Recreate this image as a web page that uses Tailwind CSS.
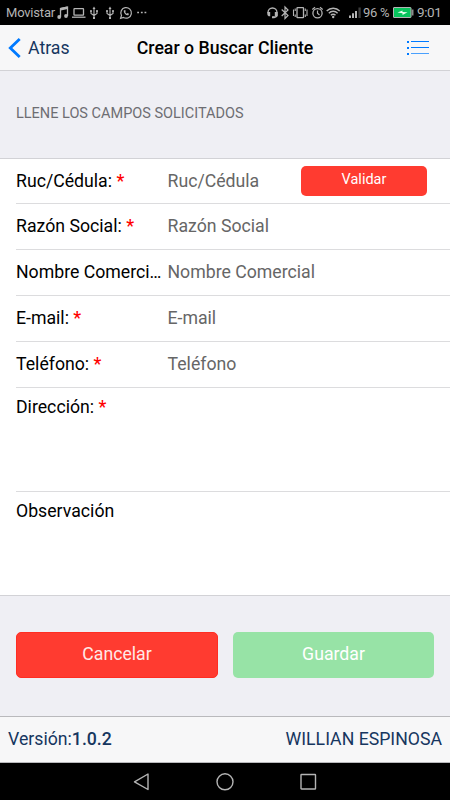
<!DOCTYPE html>
<html lang="es">
  <head>
    <meta charset="UTF-8" />
    <meta name="viewport" content="width=device-width, initial-scale=1.0" />
    <title>Crear o Buscar Cliente</title>
    <script src="https://cdn.jsdelivr.net/npm/@tailwindcss/browser@4"></script>
  </head>
  <body class="flex flex-col h-[800px] w-[450px] overflow-hidden bg-[#efeff4] font-['Roboto',sans-serif] text-black">
    <!-- status bar -->
    <div class="flex items-center h-[25px] shrink-0 bg-black text-[#b4b4b4] text-[13px] leading-[25px] whitespace-nowrap">
      <span class="ml-[6px] w-[50px] tracking-[-0.2px]">Movistar</span>
      <svg class="shrink-0" width="94" height="25" viewBox="56 0 94 25" fill="none" stroke="currentColor" stroke-width="1.3">
        <path d="M60.500 17V8.500L67.500 7V16" />
        <path d="M60.500 9.300L67.500 7.800" stroke-width="2.500" />
        <circle cx="59.200" cy="17" r="1.900" fill="currentColor" stroke="none" />
        <circle cx="66" cy="16" r="1.900" fill="currentColor" stroke="none" />
        <rect x="74" y="8.700" width="9.500" height="6.500" rx="0.500" />
        <path d="M72 17.200H85.500" />
        <path d="M94 8V18M91 11V13.500L94 15.500L97 13.500V11" stroke-width="1.100" />
        <path d="M94 6.500L92.500 9H95.500ZM90.200 10H91.800V12H90.200ZM96.200 10H97.800V12H96.200ZM93 17H95V19H93Z" fill="currentColor" stroke="none" />
        <path d="M110 8V18M107 11V13.500L110 15.500L113 13.500V11" stroke-width="1.100" />
        <path d="M110 6.500L108.500 9H111.500ZM106.200 10H107.800V12H106.200ZM112.200 10H113.800V12H112.200ZM109 17H111V19H109Z" fill="currentColor" stroke="none" />
        <path d="M120.600 18.300L121.500 15.500A5.300 5.300 0 1 1 123.500 17.500Z" stroke-width="1.200" />
        <path d="M123.800 10.400C123.400 12.800 126 15.500 128.400 15.200L129 13.800L127.500 13L126.800 13.700C126 13.300 125.400 12.600 125.200 12L125.700 11.300L125.200 9.900Z" fill="currentColor" stroke="none" />
        <path d="M137.200 12.500H139M140.900 12.500H142.700M144.500 12.500H146.300" stroke-width="1.700" />
      </svg>
      <svg class="shrink-0 ml-[114px]" width="99" height="25" viewBox="264 0 99 25" fill="none" stroke="currentColor" stroke-width="1.300">
        <path d="M268 13.500V12.500A4.500 4.500 0 0 1 277 12.500V15.500Q276.500 17.300 273 17.300" />
        <path d="M267.400 12H270.200V16.300H268.600L267.400 15ZM274.800 12H277.600V16.300H274.800ZM272 16.200H274.500V18.300H272Z" fill="currentColor" stroke="none" />
        <path d="M281.700 9.500L288 15.500L285 18.500V7L288 10L281.700 16" stroke-width="1.200" />
        <rect x="297" y="7.700" width="6.500" height="10" rx="0.500" />
        <path d="M293.500 9.500V16M295.200 8.500V11M295.200 14.500V17M307 9.500V16M305.300 8.500V11M305.300 14.500V17" stroke-width="1.100" />
        <circle cx="317.500" cy="13.200" r="4.600" />
        <path d="M317.500 10.500V13.300L319.500 15M312.300 9.500L315 7.200M322.700 9.500L320 7.200" stroke-width="1.200" />
        <path d="M326.700 11A9 9 0 0 1 339.700 11M328.800 13.200A6 6 0 0 1 337.600 13.200M330.900 15.300A3.200 3.200 0 0 1 335.500 15.300" stroke-width="1.400" />
        <circle cx="333.200" cy="17" r="1.200" fill="currentColor" stroke="none" />
        <path d="M350 18V15.500M353 18V13.300M356 18V11" stroke-width="2" />
        <path d="M359.600 18V7.500" stroke="#3c3c3c" stroke-width="2.300" />
      </svg>
      <span class="w-[30px] tracking-[-0.3px]">96 %</span>
      <svg class="shrink-0" width="22" height="25" viewBox="393 0 22 25">
        <rect x="393.500" y="7.500" width="17.500" height="10" rx="0.500" fill="#08c45c" stroke="#b4b4b4" />
        <path d="M411.500 9.500H413.500V15.500H411.500Z" fill="#8c8c8c" />
        <path d="M397.500 12.500L402.500 10.500V12L407.500 12.300L402.500 15V13.200Z" fill="#e6ffec" />
      </svg>
      <span class="ml-[2px] tracking-[-0.4px] text-[13.500px]">9:01</span>
    </div>

    <!-- navigation bar -->
    <header class="grid grid-cols-[110px_1fr_110px] items-center h-[46px] shrink-0 bg-[#f7f7f8] border-b border-[#d2d2d6]">
      <a class="flex items-center pl-2 text-[#16365f] text-[17.7px] leading-6">
        <svg class="mr-[7px]" width="13" height="20" viewBox="0 0 13 20" fill="none" stroke="#007aff" stroke-width="2.800">
          <path d="M11.700 1L2.300 10L11.700 19" />
        </svg>
        Atras
      </a>
      <h1 class="text-center text-[17.7px] leading-6 font-medium whitespace-nowrap">Crear o Buscar Cliente</h1>
      <svg class="justify-self-end mr-[20px] mt-[1px]" width="24" height="16" viewBox="0 0 24 16" fill="#007aff">
        <path d="M1 1H3V3H1ZM5 1H23V2H5ZM1 7H3V9H1ZM5 7H23V8H5ZM1 13H3V15H1Z" />
        <path d="M5 13H23V14H5Z" fill-opacity="0.700" />
      </svg>
    </header>

    <h2 class="h-[87px] shrink-0 pl-4 leading-[86px] text-[14.5px] text-[#6d6d72]">LLENE LOS CAMPOS SOLICITADOS</h2>

    <!-- client form -->
    <form class="shrink-0 bg-white border-y border-[#d2d2d6] pl-4 text-[17.7px] leading-6">
      <div class="flex items-center h-[45px] border-b border-[#dcdcde]">
        <label class="w-[151.5px]">Ruc/Cédula: <span class="text-[#ff0000] font-medium">*</span></label>
        <span class="w-[133.5px] text-[#666]">Ruc/Cédula</span>
        <button type="button" class="w-[126px] h-[30px] pb-[2px] rounded-[5px] bg-[#ff3b30] text-white text-[14.5px] leading-5">Validar</button>
      </div>
      <div class="flex items-center h-[46px] pb-px border-b border-[#dcdcde]">
        <label class="w-[151.5px]">Razón Social: <span class="text-[#ff0000] font-medium">*</span></label>
        <span class="text-[#666]">Razón Social</span>
      </div>
      <div class="flex items-center h-[46px] pb-px border-b border-[#dcdcde]">
        <label class="w-[151.5px] whitespace-nowrap">Nombre Comerci…</label>
        <span class="text-[#666]">Nombre Comercial</span>
      </div>
      <div class="flex items-center h-[46px] pb-px border-b border-[#dcdcde]">
        <label class="w-[151.5px]">E-mail: <span class="text-[#ff0000] font-medium">*</span></label>
        <span class="text-[#666]">E-mail</span>
      </div>
      <div class="flex items-center h-[46px] pb-px border-b border-[#dcdcde]">
        <label class="w-[151.5px]">Teléfono: <span class="text-[#ff0000] font-medium">*</span></label>
        <span class="text-[#666]">Teléfono</span>
      </div>
      <div class="h-[104px] pt-[7px] border-b border-[#dcdcde]">
        <label>Dirección: <span class="text-[#ff0000] font-medium">*</span></label>
      </div>
      <div class="h-[103px] pt-[7px]">
        <label>Observación</label>
      </div>
    </form>

    <div class="flex-1 flex gap-[15px] pt-[36px] pl-4 text-[17.7px] text-white">
      <button class="w-[202px] h-[46px] pb-[2px] rounded-[5px] bg-[#ff3b30] border border-[#ff2d22] text-[#ffe9e7]">Cancelar</button>
      <button class="w-[201px] h-[46px] pb-[2px] rounded-[5px] bg-[#97e3a6]">Guardar</button>
    </div>

    <footer class="flex items-center justify-between h-[47px] shrink-0 px-2 pb-px bg-[#f7f7f8] border-y border-[#b9b9bc] text-[17.7px] leading-6 text-[#16365f]">
      <span>Versión:<b class="font-medium">1.0.2</b></span>
      <span>WILLIAN ESPINOSA</span>
    </footer>

    <!-- android buttons -->
    <div class="flex items-center h-[37px] shrink-0 bg-black pl-[133px] gap-[66px]">
      <svg width="17" height="20" viewBox="0 0 17 20" fill="none" stroke="#b4b4b4" stroke-width="1.400">
        <path d="M15 2V17.500L1.500 9.800Z" stroke-linejoin="round" />
      </svg>
      <svg width="18" height="20" viewBox="0 0 18 20" fill="none" stroke="#b4b4b4" stroke-width="1.400">
        <circle cx="9" cy="9.800" r="8" />
      </svg>
      <svg width="18" height="20" viewBox="0 0 18 20" fill="none" stroke="#b4b4b4" stroke-width="1.400">
        <rect x="1" y="2.500" width="14.500" height="14.500" rx="0.500" />
      </svg>
    </div>
  </body>
</html>
